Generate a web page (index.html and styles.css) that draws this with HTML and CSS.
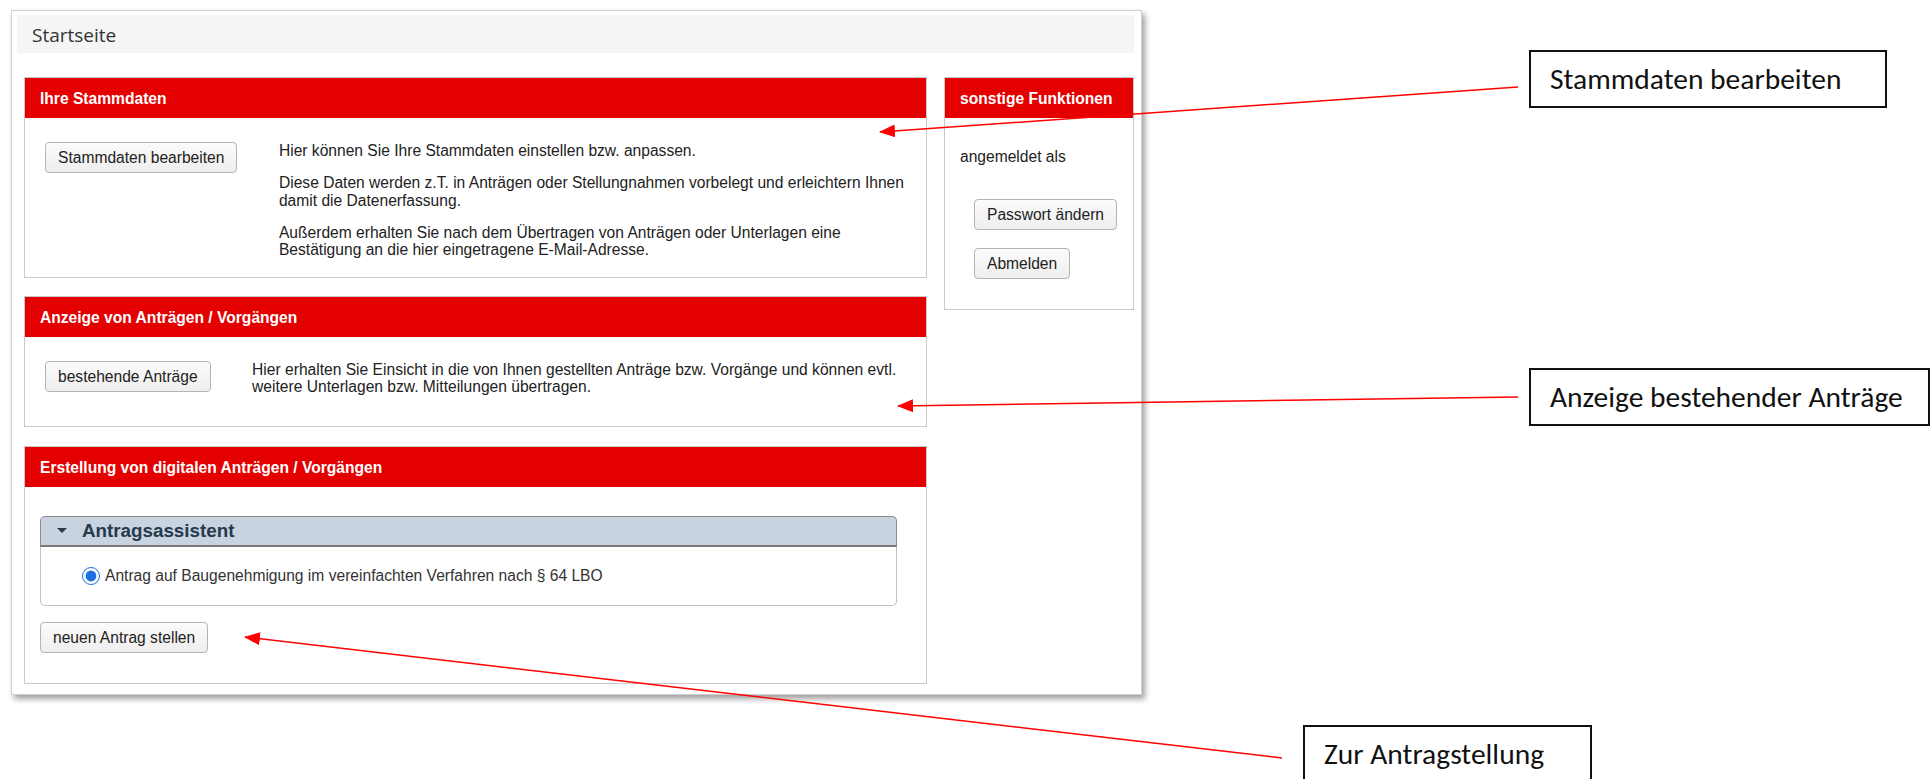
FILE: index.html
```html
<!DOCTYPE html>
<html lang="de">
<head>
<meta charset="utf-8">
<title>Startseite</title>
<link rel="stylesheet" href="styles.css">
</head>
<body>
<div class="page">
  <div class="frame">
    <div class="titlebar">Startseite</div>
    <div class="columns">
      <div class="main-col">
        <section class="panel panel-master">
          <h2 class="panel-head">Ihre Stammdaten</h2>
          <div class="panel-body split">
            <div><button class="btn" type="button">Stammdaten bearbeiten</button></div>
            <div class="copy">
              <p>Hier können Sie Ihre Stammdaten einstellen bzw. anpassen.</p>
              <p>Diese Daten werden z.T. in Anträgen oder Stellungnahmen vorbelegt und erleichtern Ihnen damit die Datenerfassung.</p>
              <p>Außerdem erhalten Sie nach dem Übertragen von Anträgen oder Unterlagen eine Bestätigung an die hier eingetragene E-Mail-Adresse.</p>
            </div>
          </div>
        </section>

        <section class="panel panel-list">
          <h2 class="panel-head">Anzeige von Anträgen / Vorgängen</h2>
          <div class="panel-body split split-list">
            <div><button class="btn" type="button">bestehende Anträge</button></div>
            <div class="copy">
              <p>Hier erhalten Sie Einsicht in die von Ihnen gestellten Anträge bzw. Vorgänge und können evtl. weitere Unterlagen bzw. Mitteilungen übertragen.</p>
            </div>
          </div>
        </section>

        <section class="panel panel-create">
          <h2 class="panel-head">Erstellung von digitalen Anträgen / Vorgängen</h2>
          <div class="panel-body create-body">
            <div class="wizard">
              <div class="wizard-head"><span class="caret"></span>Antragsassistent</div>
              <div class="wizard-body">
                <label class="choice"><input type="radio" name="antrag" checked><span>Antrag auf Baugenehmigung im vereinfachten Verfahren nach § 64 LBO</span></label>
              </div>
            </div>
            <div><button class="btn" type="button">neuen Antrag stellen</button></div>
          </div>
        </section>
      </div>

      <aside class="panel side">
        <h2 class="panel-head">sonstige Funktionen</h2>
        <div class="side-body">
          <div class="login">angemeldet als</div>
          <div class="side-actions">
            <button class="btn" type="button">Passwort ändern</button>
            <button class="btn" type="button">Abmelden</button>
          </div>
        </div>
      </aside>
    </div>
  </div>

  <svg class="arrows" width="1932" height="779" viewBox="0 0 1932 779" aria-hidden="true">
    <defs>
      <marker id="head" markerUnits="userSpaceOnUse" markerWidth="16" markerHeight="13" refX="15" refY="6.5" orient="auto">
        <path d="M0,0 L16,6.5 L0,13 z" fill="#ff0000"/>
      </marker>
    </defs>
    <line x1="1518" y1="87" x2="880" y2="132" marker-end="url(#head)"/>
    <line x1="1518" y1="397" x2="898" y2="406" marker-end="url(#head)"/>
    <line x1="1282" y1="758" x2="245" y2="637" marker-end="url(#head)"/>
  </svg>

  <div class="note note-master">Stammdaten bearbeiten</div>
  <div class="note note-list">Anzeige bestehender Anträge</div>
  <div class="note note-create">Zur Antragstellung</div>
</div>
</body>
</html>
```

FILE: styles.css
```css
html, body {
  margin: 0;
  padding: 0;
  background: #ffffff;
}

.page {
  position: relative;
  width: 1932px;
  height: 779px;
  overflow: hidden;
  font-family: "Liberation Sans", Arial, sans-serif;
  color: #222222;
}

/* main window */
.frame {
  box-sizing: border-box;
  margin: 10px 0 0 11px;
  width: 1131px;
  height: 685px;
  border: 1px solid #cfcfcf;
  background: #ffffff;
  box-shadow: 3px 4px 6px rgba(0, 0, 0, 0.38);
  padding: 4px 7px 0 12px;
}

.titlebar {
  margin-left: -7px;
  height: 38px;
  background: #f5f5f5;
  padding-left: 15px;
  font-family: "Open Sans", "Noto Sans", sans-serif;
  font-size: 19px;
  line-height: 40px;
  color: #333333;
}

.columns {
  display: flex;
  gap: 17px;
  margin-top: 24px;
  align-items: flex-start;
}

.main-col {
  width: 903px;
  flex: none;
  display: flex;
  flex-direction: column;
}

/* panels with red caption */
.panel {
  box-sizing: border-box;
  border: 1px solid #c9c9c9;
  background: #ffffff;
}

.panel-list { margin-top: 18px; }
.panel-create { margin-top: 19px; }

.panel-head {
  margin: 0;
  height: 40px;
  background: #e40000;
  color: #ffffff;
  font-weight: bold;
  font-size: 15.6px;
  line-height: 41px;
  padding-left: 15px;
  white-space: nowrap;
}

.panel-body {
  padding: 24px 10px 18px 20px;
}

.split {
  display: grid;
  grid-template-columns: auto 1fr;
  column-gap: 41.5px;
}

.split-list {
  padding-bottom: 30px;
}

.copy {
  font-size: 15.6px;
  line-height: 17.5px;
  color: #222222;
}

.copy p {
  margin: 0 0 14.5px 0;
}

.copy p:last-child {
  margin-bottom: 0;
}

/* buttons */
.btn {
  box-sizing: border-box;
  height: 31px;
  padding: 0 12px;
  border: 1px solid #b4b4b4;
  border-radius: 4px;
  background: linear-gradient(#fbfbfb, #eeeeee);
  color: #222222;
  font-family: "Liberation Sans", Arial, sans-serif;
  font-size: 15.6px;
  line-height: 29px;
  white-space: nowrap;
  cursor: pointer;
}

/* application wizard */
.create-body {
  padding: 29px 29px 30px 15px;
  display: flex;
  flex-direction: column;
  gap: 16px;
}

.wizard-head {
  box-sizing: border-box;
  height: 31px;
  background: #c9d3df;
  border: 1px solid #8c8c8c;
  border-bottom: 2px solid #7a7a7a;
  border-radius: 5px 5px 0 0;
  display: flex;
  align-items: center;
  padding-left: 16px;
  font-weight: bold;
  font-size: 18.8px;
  color: #26394d;
}

.caret {
  width: 0;
  height: 0;
  border-left: 5.5px solid transparent;
  border-right: 5.5px solid transparent;
  border-top: 5px solid #26394d;
  margin-right: 15px;
}

.wizard-body {
  box-sizing: border-box;
  height: 59px;
  border: 1px solid #c2c2c2;
  border-top: none;
  border-radius: 0 0 5px 5px;
  padding: 20px 0 0 41px;
}

.choice {
  display: flex;
  align-items: center;
  gap: 5px;
  font-size: 15.6px;
  color: #333333;
}

.choice input {
  margin: 0;
  width: 18px;
  height: 18px;
  accent-color: #1a6fe6;
}

/* right-hand column */
.side {
  width: 190px;
  flex: none;
}

.side-body {
  padding: 30px 0 30px 15px;
}

.login {
  font-size: 15.6px;
  line-height: 18px;
  color: #222222;
}

.side-actions {
  margin: 33px 0 0 14px;
  display: flex;
  flex-direction: column;
  align-items: flex-start;
  gap: 18px;
}

/* callouts */
.arrows {
  position: absolute;
  left: 0;
  top: 0;
  pointer-events: none;
}

.arrows line {
  stroke: #ff0000;
  stroke-width: 1.5;
}

.note {
  position: absolute;
  box-sizing: border-box;
  height: 58px;
  border: 2px solid #111111;
  background: #ffffff;
  padding-left: 19px;
  font-family: "Carlito", "Lato", sans-serif;
  font-size: 29.5px;
  line-height: 54px;
  color: #111111;
  white-space: nowrap;
}

.note-master { left: 1529px; top: 50px; width: 358px; }
.note-list { left: 1529px; top: 368px; width: 401px; }
.note-create { left: 1303px; top: 725px; width: 289px; }
```
